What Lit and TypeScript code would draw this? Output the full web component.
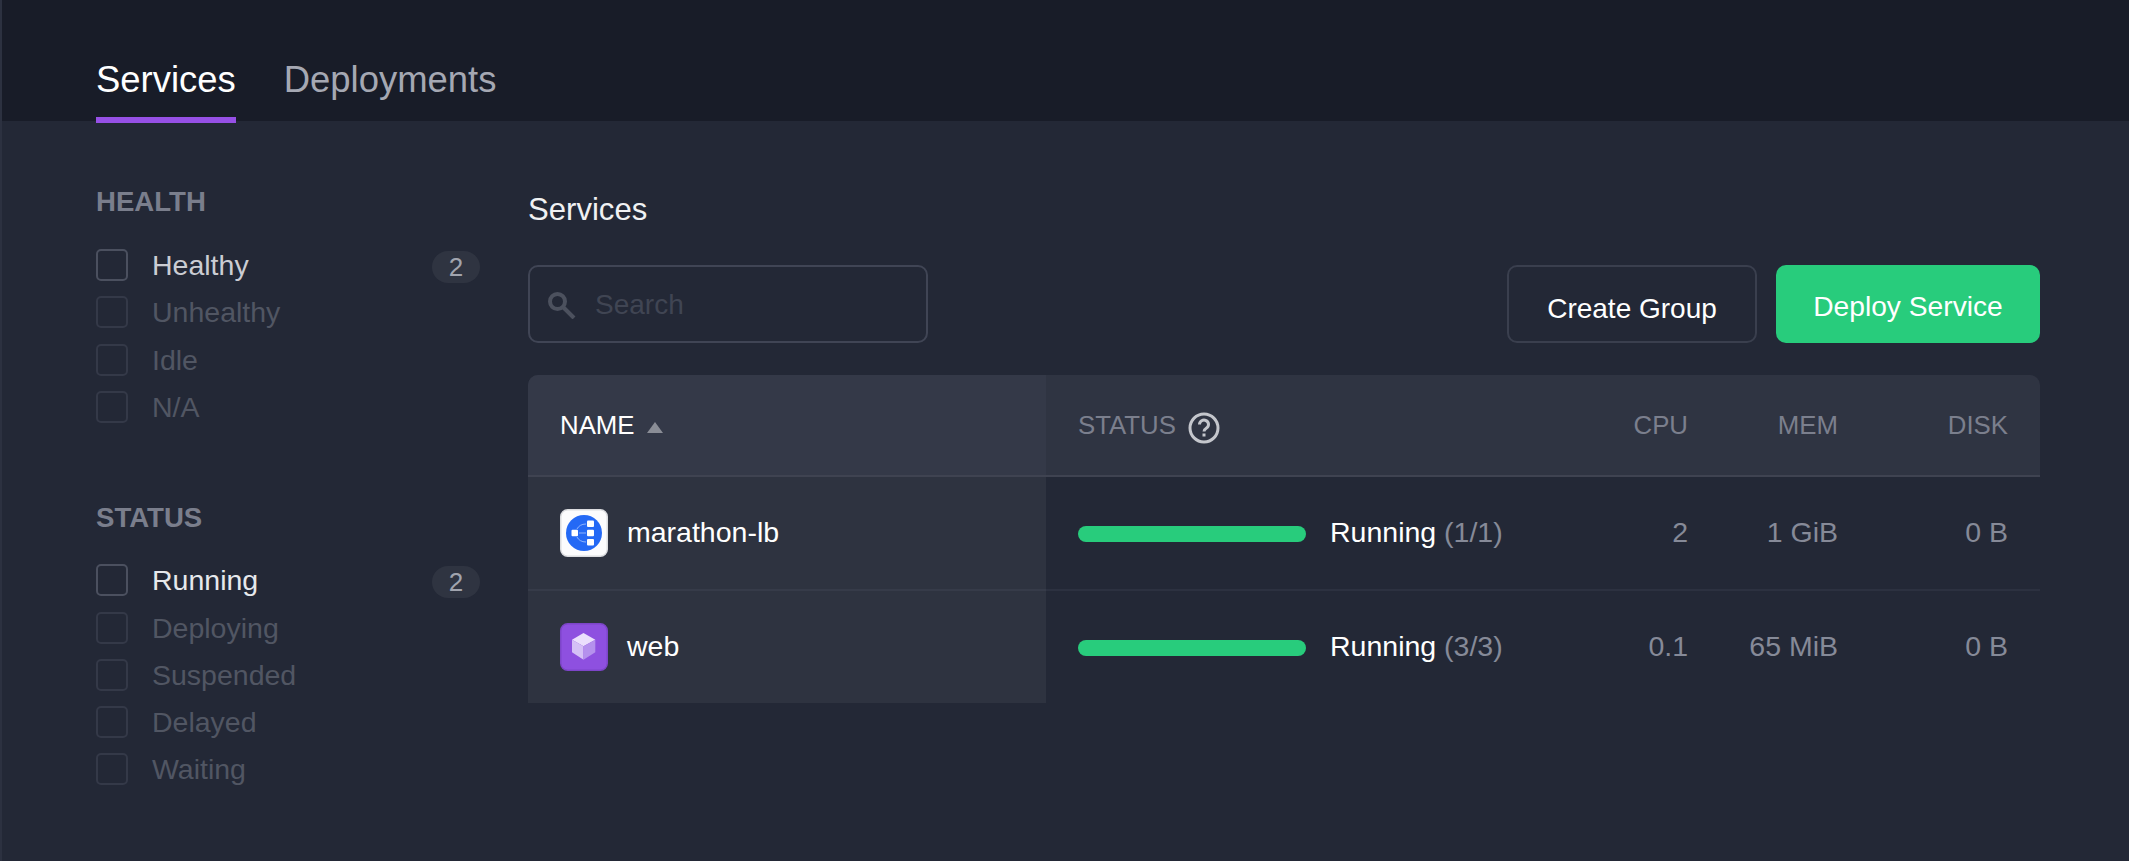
import { LitElement, css, html } from 'lit'
import { customElement } from 'lit/decorators.js'

type Filter = {
  label: string;
  count?: number;
  bright?: boolean;
}

type Service = {
  name: string;
  kind: 'marathon' | 'cube';
  tasks: string;
  cpu: string;
  mem: string;
  disk: string;
}

const HEALTH: Filter[] = [
  { label: 'Healthy', count: 2 },
  { label: 'Unhealthy' },
  { label: 'Idle' },
  { label: 'N/A' },
];

const STATUS: Filter[] = [
  { label: 'Running', count: 2, bright: true },
  { label: 'Deploying' },
  { label: 'Suspended' },
  { label: 'Delayed' },
  { label: 'Waiting' },
];

const SERVICES: Service[] = [
  { name: 'marathon-lb', kind: 'marathon', tasks: '(1/1)', cpu: '2', mem: '1 GiB', disk: '0 B' },
  { name: 'web', kind: 'cube', tasks: '(3/3)', cpu: '0.1', mem: '65 MiB', disk: '0 B' },
];

const marathonIcon = html`
  <svg class="svc-icon" width="48" height="48" viewBox="0 0 48 48">
    <rect x="0.750" y="0.750" width="46.500" height="46.500" rx="7" fill="#fcfcfd" stroke="#dcdde0" stroke-width="1.500"/>
    <circle cx="24" cy="24" r="18" fill="#2469f5"/>
    <g fill="#fff">
      <rect x="11.500" y="20.750" width="6.500" height="6.500" rx="1"/>
      <rect x="27" y="11.500" width="7" height="6.500" rx="1"/>
      <rect x="27" y="20.750" width="7" height="6.500" rx="1"/>
      <rect x="27" y="30" width="7" height="6.500" rx="1"/>
    </g>
    <g fill="none" stroke="#a9c6ff" stroke-width="0.800">
      <path d="M17 20c1.500-3 4.500-5 9-5"/>
      <path d="M19 24h7"/>
      <path d="M17 28c1.500 3 4.500 5 9 5"/>
    </g>
  </svg>
`;

const cubeIcon = html`
  <svg class="svc-icon" width="48" height="48" viewBox="0 0 48 48">
    <rect x="0.750" y="0.750" width="46.500" height="46.500" rx="7" fill="#8e50e0" stroke="#7d45c9" stroke-width="1.500"/>
    <path d="M23.500 10L35.300 16.700 23.500 23.300 12 16.700z" fill="#ebdffc"/>
    <path d="M12 16.700L23.500 23.300V36.700L12 29.300z" fill="#d5c0f6"/>
    <path d="M35.300 16.700L23.500 23.300V36.700L35.300 29.300z" fill="#b591ed"/>
  </svg>
`;

@customElement('app-root')
export default class AppRoot extends LitElement {
  private _filterGroup(title: string, filters: Filter[]) {
    return html`
      <h3 class="filter-title">${title}</h3>
      <ul class="filters">
        ${filters.map(f => html`
          <li class="filter ${f.count ? 'on' : ''} ${f.bright ? 'bright' : ''}">
            <span class="check"></span>
            <span class="filter-label">${f.label}</span>
            ${f.count ? html`<span class="badge">${f.count}</span>` : ''}
          </li>
        `)}
      </ul>
    `
  }

  render() {
    return html`
      <header class="top">
        <a class="tab active">Services</a>
        <a class="tab">Deployments</a>
      </header>
      <div class="body">
        <aside class="side">
          ${this._filterGroup('HEALTH', HEALTH)}
          ${this._filterGroup('STATUS', STATUS)}
        </aside>
        <main class="main">
          <h2 class="title">Services</h2>
          <div class="toolbar">
            <label class="search">
              <svg width="28" height="28" viewBox="0 0 28 28" fill="none" stroke="#4c515e" stroke-width="4">
                <circle cx="9.500" cy="10.500" r="7.500"/>
                <path d="M15.500 16.500L26 27"/>
              </svg>
              <input type="text" placeholder="Search">
            </label>
            <button class="btn create">Create Group</button>
            <button class="btn deploy">Deploy Service</button>
          </div>
          <div class="table">
            <div class="row head">
              <div class="cell name"><span class="txt">NAME</span><span class="sort"></span></div>
              <div class="cell status">
                <span class="txt">STATUS</span>
                <svg class="help" width="32" height="32" viewBox="0 0 32 32" fill="none" stroke="#c4c6cc" stroke-width="3">
                  <circle cx="16" cy="16" r="14"/>
                  <path d="M11.500 12.500a4.500 4.300 0 1 1 7 3.500c-1.500 1-2.500 1.700-2.500 3.500"/>
                  <path d="M16 21.500v3"/>
                </svg>
              </div>
              <div class="cell num"><span class="txt">CPU</span></div>
              <div class="cell num"><span class="txt">MEM</span></div>
              <div class="cell num last"><span class="txt">DISK</span></div>
            </div>
            ${SERVICES.map(s => html`
              <div class="row">
                <div class="cell name">
                  ${s.kind === 'marathon' ? marathonIcon : cubeIcon}
                  <span class="txt">${s.name}</span>
                </div>
                <div class="cell status">
                  <span class="bar"></span>
                  <span class="txt run">Running <span class="tasks">${s.tasks}</span></span>
                </div>
                <div class="cell num"><span class="txt">${s.cpu}</span></div>
                <div class="cell num"><span class="txt">${s.mem}</span></div>
                <div class="cell num last"><span class="txt">${s.disk}</span></div>
              </div>
            `)}
          </div>
        </main>
      </div>
    `
  }

  static styles = css`
:host {
  display: block;
  box-sizing: border-box;
  min-height: 861px;
  background: #232836;
  border-left: 2px solid #2c3140;
  font-family: "Liberation Sans", Arial, sans-serif;
  color: #fff;
}
.top {
  height: 121px;
  box-sizing: border-box;
  background: #181c28;
  display: flex;
  align-items: flex-end;
  gap: 48px;
  padding-left: 94px;
}
.tab {
  position: relative;
  margin-bottom: -2px;
  padding-bottom: 17px;
  border-bottom: 6px solid transparent;
  font-size: 36.450px;
  line-height: 40px;
  color: #a5a8b3;
}
.tab.active {
  color: #fff;
  border-bottom-color: #9650e6;
}
.body {
  display: grid;
  grid-template-columns: 384px 1fr;
  gap: 48px;
  padding: 65px 89px 0 94px;
}
.filter-title {
  margin: 0 0 31px;
  font-size: 27.600px;
  line-height: 32px;
  font-weight: 700;
  color: #7a7e8c;
}
.filters {
  list-style: none;
  margin: 0 0 78.500px;
  padding: 0;
  display: flex;
  flex-direction: column;
  gap: 15.250px;
}
.filters + .filter-title { padding-top: 1px; margin-bottom: 30px; }
.filter {
  height: 32px;
  display: flex;
  align-items: center;
  font-size: 28.500px;
  color: #515663;
}
.check {
  box-sizing: border-box;
  width: 32px;
  height: 32px;
  margin-right: 24px;
  border: 2px solid #343948;
  border-radius: 5px;
}
.filter.on { color: #cbcdd3; }
.filter.bright { color: #e6e8ec; }
.filter.on .check { border-color: #4b505f; }
.filter-label { flex: 1; padding-top: 1px; }
.badge {
  width: 48px;
  height: 32px;
  margin-top: 4px;
  border-radius: 16px;
  background: #2f3441;
  color: #a1a4ae;
  font-size: 26px;
  line-height: 32px;
  text-align: center;
}
.main { padding-top: 8px; }
.title {
  margin: 0 0 39px;
  font-size: 31.100px;
  line-height: 32px;
  font-weight: 400;
  color: #f0f1f3;
}
.toolbar {
  display: flex;
  height: 78px;
  margin-bottom: 32px;
  gap: 19px;
}
.search {
  box-sizing: border-box;
  width: 400px;
  margin-right: auto;
  border: 2px solid #404555;
  border-radius: 10px;
  display: flex;
  align-items: center;
  padding-left: 18px;
  gap: 19px;
}
.search svg { margin-top: 2px; flex: none; }
.search input {
  flex: 1;
  min-width: 0;
  border: 0;
  outline: 0;
  padding: 2px 0 0;
  background: transparent;
  color: #fff;
  font: 28px "Liberation Sans", Arial, sans-serif;
}
.search input::placeholder { color: #404553; opacity: 1; }
.btn {
  box-sizing: border-box;
  border-radius: 10px;
  color: #fff;
  font-family: inherit;
  cursor: pointer;
}
.create {
  width: 250px;
  padding: 10px 0 0;
  border: 2px solid #3a3f4e;
  background: transparent;
  font-size: 28px;
}
.deploy {
  width: 264px;
  padding: 4px 0 0;
  border: 0;
  background: #28cc7c;
  font-size: 28.200px;
}
.table {
  border-radius: 10px 10px 0 0;
  overflow: hidden;
}
.row {
  display: grid;
  grid-template-columns: 518px 1fr 121px 150px 202px;
  height: 114px;
  box-sizing: border-box;
  border-bottom: 2px solid #2c3140;
}
.row:last-child { height: 112px; border-bottom: 0; }
.row.head {
  height: 102px;
  background: #2f3442;
  border-bottom-color: #3f4351;
}
.cell {
  display: flex;
  align-items: center;
  font-size: 28.500px;
  color: #868a98;
}
.head .cell { font-size: 25.800px; color: #7b7f8d; }
.txt { padding-bottom: 1px; }
.head .txt { padding: 0; }
.cell.name {
  padding-left: 32px;
  background: #2e3340;
  color: #fff;
  margin-bottom: -2px;
  border-bottom: 2px solid #363b49;
}
.row:last-child .cell.name { margin-bottom: 0; border-bottom: 0; }
.head .cell.name { background: #343948; color: #fff; border-bottom-color: #3f4351; }
.svc-icon { margin-right: 19px; flex: none; }
.sort {
  width: 0;
  height: 0;
  margin: 5px 0 0 12px;
  border-left: 8px solid transparent;
  border-right: 8px solid transparent;
  border-bottom: 11px solid #8a8d96;
}
.cell.status { padding-left: 32px; }
.help { margin: 5px 0 0 12px; }
.bar {
  width: 228px;
  height: 16px;
  margin: 2px 24px 0 0;
  border-radius: 8px;
  background: #28cc7c;
}
.run { color: #fff; }
.tasks { color: #868a98; }
.cell.num { justify-content: flex-end; }
.cell.last { padding-right: 32px; }
`
}

declare global {
  interface HTMLElementTagNameMap {
    'app-root': AppRoot
  }
}
